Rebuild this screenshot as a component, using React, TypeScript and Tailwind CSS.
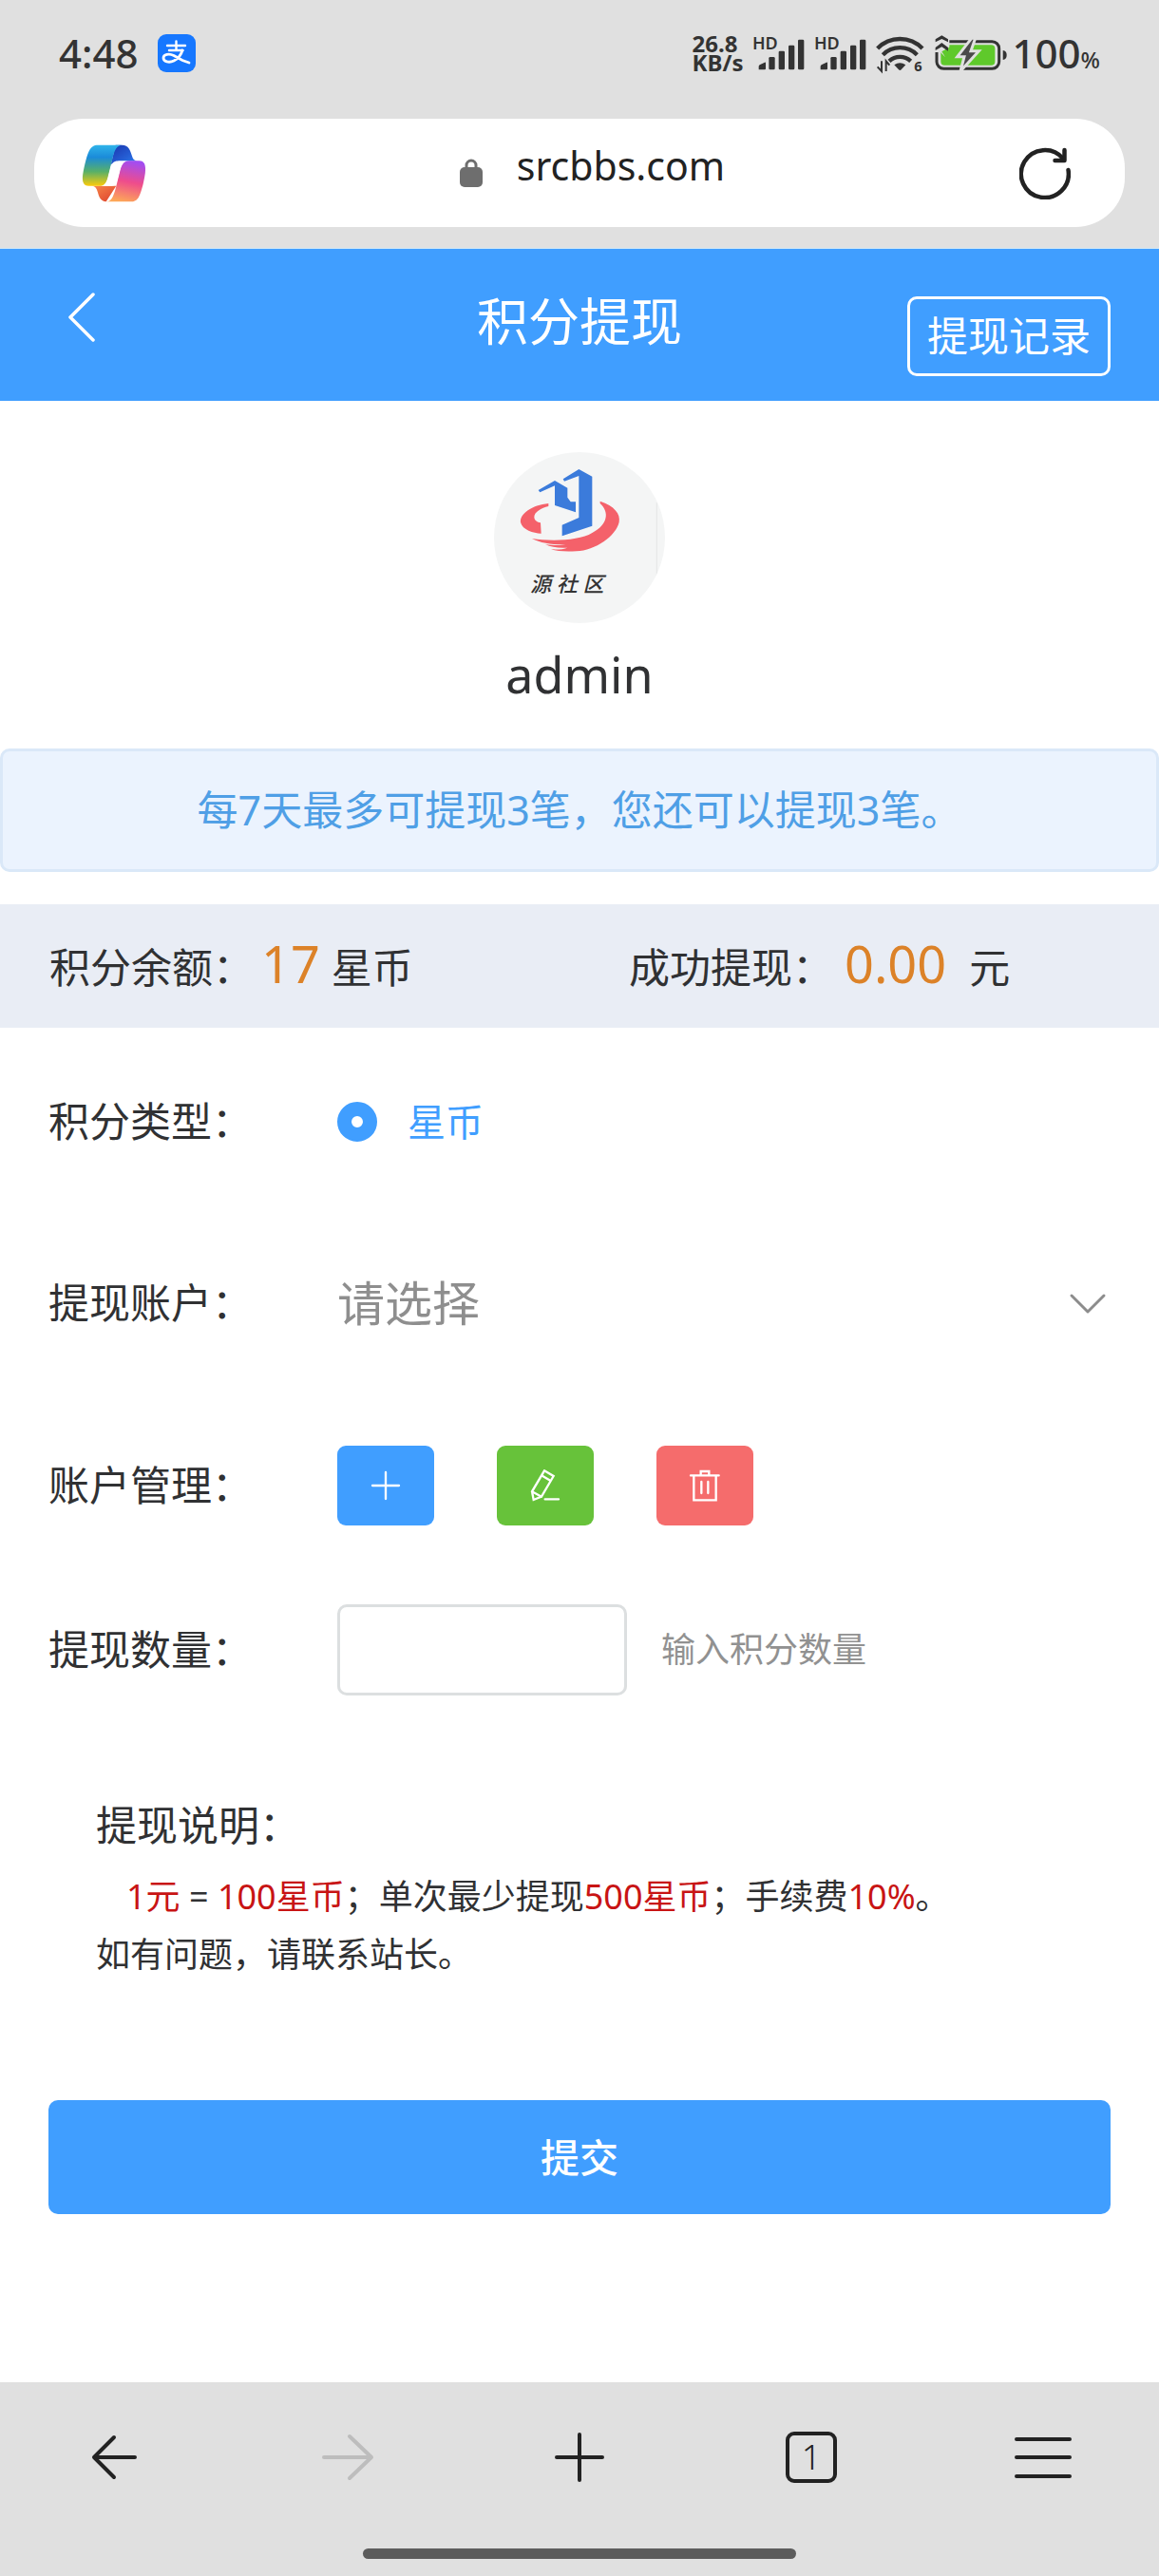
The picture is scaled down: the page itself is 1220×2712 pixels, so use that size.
import React, { useState } from 'react';

const StatusClock = () => (
  <div className="flex items-center gap-5">
    <span className="text-[42px] leading-[60px] font-medium">4:48</span>
    <svg className="w-10 h-10" viewBox="0 0 40 40" fill="none" stroke="#fff" strokeLinecap="round">
      <rect width="40" height="40" rx="9" fill="#1677ff" stroke="none" />
      <path d="M10 12h19M19.500 7.500v9M12 17h14.500" strokeWidth="2.400" />
      <path d="M26 17c-1.500 5-5 9-9 11-5 2.500-11 1-11-3 0-4 6-5 11-2.500l9 5 7 2.500" strokeWidth="2.800" />
    </svg>
  </div>
);

const SignalIcon = () => (
  <svg className="w-[55px] h-[52px]" viewBox="0 -26 165 156" fill="#333">
    <text x="0" y="41" fontSize="54" fontWeight="600">HD</text>
    <path d="M20 104V94q0-3 3-5l16-8q3-1 3 2v18q0 3-3 3z" />
    <rect x="52" y="64" width="19" height="40" rx="4" />
    <rect x="83" y="45" width="19" height="59" rx="4" />
    <rect x="114" y="27" width="19" height="77" rx="4" />
    <rect x="144" y="9" width="19" height="95" rx="4" />
  </svg>
);

const WifiIcon = () => (
  <svg className="w-[52px] h-[50px]" viewBox="597 18 156 150" fill="none" stroke="#333" strokeWidth="13">
    <path d="M602 78a99 99 0 0 1 142 0" />
    <path d="M619 98a76 76 0 0 1 108 0" />
    <path d="M639 118a50 50 0 0 1 68 0" />
    <path d="M655 130q18-12 36 0l-14 15q-4 4-8 0z" fill="#333" stroke="none" />
    <path d="M615 118v32l-13-14M629 150v-32l11 13" strokeWidth="6" />
    <text x="718" y="151" fontSize="44" fontWeight="700" fill="#333" stroke="none">6</text>
  </svg>
);

const BatteryIcon = () => (
  <svg className="w-[77px] h-[38px]" viewBox="796 28 231 114" fill="none">
    <rect x="802" y="48" width="197" height="86" rx="22" stroke="#333" strokeWidth="9" />
    <rect x="815" y="59" width="171" height="64" rx="12" fill="#5fc92b" />
    <path d="M1011 76q12 2 12 15t-12 15z" fill="#333" />
    <path d="M796 28h46v48l-14 20-14-14h-18z" fill="#e0e0e0" />
    <path d="M818 80l14 22 22-42-12 6z" fill="#5fc92b" />
    <path d="M912 38l-45 58h22l-12 46 58-64h-25l14-40z" fill="#4a4a4a" stroke="#e0e0e0" strokeWidth="9" />
    <path d="M798 50v-9l20-12 20 12v9l-20-10zM798 76v-9l20-15 20 15v11l-20-13z" fill="#333" />
  </svg>
);

const CopilotLogo = () => (
  <svg className="w-[68px] h-[61px]" viewBox="108 379 204 184">
    <defs>
      <linearGradient id="ribbonLeft" x1="0" y1="0" x2="0" y2="1">
        <stop offset="0" stopColor="#2fb4ea" />
        <stop offset=".3" stopColor="#1b8bd9" />
        <stop offset=".65" stopColor="#58b068" />
        <stop offset="1" stopColor="#fccb0a" />
      </linearGradient>
      <linearGradient id="ribbonRight" x1=".6" y1="0" x2=".4" y2="1">
        <stop offset="0" stopColor="#a24df2" />
        <stop offset=".5" stopColor="#ee4c8c" />
        <stop offset="1" stopColor="#fda758" />
      </linearGradient>
      <linearGradient id="foldTop" x1="0" y1="0" x2="1" y2="1">
        <stop offset="0" stopColor="#1a34ad" />
        <stop offset="1" stopColor="#2d7cf0" />
      </linearGradient>
      <linearGradient id="foldBottom" x1="0" y1="0" x2="1" y2="1">
        <stop offset="0" stopColor="#f8894a" />
        <stop offset="1" stopColor="#dc3f2c" />
      </linearGradient>
    </defs>
    <path d="M215 381h21c20 0 26 17 31 34 3 12 9 16 21 17h-63l-25 10z" fill="url(#foldTop)" />
    <path d="M140 511h77l-32 50c-17 0-23-16-27-31-3-12-8-18-18-19z" fill="url(#foldBottom)" />
    <path d="M160 381h76c-16 0-24 14-31 44l-15 60c-5 18-12 26-25 26h-35c-17 0-22-13-19-36 6-35 14-65 21-77 6-11 13-17 28-17z" fill="url(#ribbonLeft)" />
    <path d="M262 561h-77c16 0 23-16 30-41l15-60c6-20 13-29 28-29h32c17 0 22 14 19 39-5 35-14 65-21 77-6 10-13 14-26 14z" fill="url(#ribbonRight)" />
    <path d="M222 432h32c-14 1-20 10-25 28l-10 38c-3 9-8 13-17 13h-34c13-2 19-10 23-26l8-32c4-14 10-21 23-21z" fill="#fff" />
  </svg>
);

const Avatar = () => (
  <svg className="w-[180px] h-[180px] rounded-full bg-[#f4f5f5]" viewBox="60 45 540 540">
    <path d="M232 207c-52 5-92 33-88 60 6 24 40 34 65 35l-2-34c-14-2-20-10-20-18 0-16 22-28 45-34z" fill="#f4616a" />
    <path d="M395 200c45 15 65 40 60 66-10 44-75 89-135 92-35 2-60 0-80-6 20 1 40 0 52-5-28 2-52-2-70-11 24 4 48 4 64 1-42 1-80-5-106-19 60 9 150 7 190-18 50-26 55-66 25-93z" fill="#f4616a" />
    <path d="M200 165l52-30 40 23v30l10 14h16v33l-66-22v-62l-47 21z" fill="#3b7bdb" />
    <path d="M278 130l50-31 42 23v156l-95 32v-35l53-23V120l-46 17z" fill="#3b7bdb" />
    <path d="M574 205v230" stroke="#dcdcdc" strokeWidth="2" />
    <text x="174" y="486" fontSize="66" fontWeight="500" fontStyle="italic" fill="#333">源 社 区</text>
  </svg>
);

interface FormRowProps {
  label: string;
  htmlFor?: string;
  className?: string;
  children: React.ReactNode;
}

const FormRow: React.FC<FormRowProps> = ({ label, htmlFor, className, children }) => (
  <div className={`flex items-center ${className ?? ''}`}>
    <label htmlFor={htmlFor} className="w-[304px] shrink-0 text-[43px] leading-[60px]">
      {label}
    </label>
    {children}
  </div>
);

const App: React.FC = () => {
  const [coin, setCoin] = useState('star');
  const [account, setAccount] = useState('');
  const [amount, setAmount] = useState('');

  return (
    <div className="min-h-screen flex flex-col bg-white text-[#303133] font-['Noto_Sans','Noto_Sans_CJK_SC',sans-serif]">
      {/* Status bar and address bar */}
      <div className="bg-[#e0e0e0] px-9 pb-[22px] text-[#333]">
        <div className="flex items-center justify-between px-[26px] pt-[26px] pb-[39px]">
          <StatusClock />
          <div className="flex items-center gap-1">
            <div className="flex items-center gap-[10px]">
              <div className="text-2xl leading-5 font-bold">
                <div>26.8</div>
                <div>KB/s</div>
              </div>
              <SignalIcon />
              <SignalIcon />
              <WifiIcon />
              <BatteryIcon />
            </div>
            <div className="flex items-baseline text-[42px] leading-[60px] font-medium">
              100<span className="text-2xl">%</span>
            </div>
          </div>
        </div>
        <div className="flex items-center h-[114px] rounded-[52px] bg-white pl-[50px] pr-[57px]">
          <button aria-label="Copilot">
            <CopilotLogo />
          </button>
          <div className="flex-1 flex items-center justify-center gap-9 pl-5">
            <svg className="w-6 h-[30px]" viewBox="0 0 24 30">
              <path d="M7 12V7a5 5 0 0 1 10 0v5" fill="none" stroke="#6e6e6e" strokeWidth="3" />
              <rect y="9" width="24" height="21" rx="5" fill="#6e6e6e" />
            </svg>
            <span className="pb-4 text-[41px] leading-[54px] text-[#222]">srcbbs.com</span>
          </div>
          <button aria-label="刷新">
            <svg className="w-[54px] h-[56px]" viewBox="0 0 54 56" fill="none" stroke="#222" strokeWidth="4.500" strokeLinecap="round" strokeLinejoin="round">
              <path d="M51.500 25A25 25 0 1 1 46 13" />
              <path d="M47.500 4v11h-10" />
            </svg>
          </button>
        </div>
      </div>

      {/* Page header */}
      <header className="grid grid-cols-3 items-center border-t border-[#cfe8f8] bg-[#409eff] px-[51px] h-[161px] text-white">
        <button aria-label="返回" className="justify-self-start pl-5 pb-4">
          <svg className="w-[30px] h-[52px]" viewBox="0 0 30 52" fill="none" stroke="currentColor" strokeWidth="3.500" strokeLinecap="round" strokeLinejoin="round">
            <path d="M27 2L3 26l24 24" />
          </svg>
        </button>
        <h1 className="text-center text-[54px] leading-[80px] pb-2">积分提现</h1>
        <div className="justify-self-end pt-6">
          <button className="h-[84px] rounded-[10px] border-3 border-white px-[18px] text-[43px] leading-[76px]">
            提现记录
          </button>
        </div>
      </header>

      <main>
        {/* User info */}
        <div className="flex flex-col items-center pt-[54px] pb-[42px]">
          <Avatar />
          <p className="mt-[18px] text-[52px] leading-[72px]">admin</p>
        </div>

        <div className="rounded-[10px] border-3 border-[#dae8f8] bg-[#ebf3fe] py-8 text-center text-[43px] leading-[60px] text-[#4f9fe6]">
          每7天最多可提现3笔，您还可以提现3笔。
        </div>

        {/* Balance */}
        <div className="mt-[34px] grid grid-cols-2 bg-[#e9edf5] pt-8 pb-7 text-[43px] leading-[70px]">
          <div className="flex items-baseline pl-[52px]">
            积分余额：
            <span className="ml-2 mr-3 text-[54px] leading-[60px] text-[#dc8228]">17</span>
            星币
          </div>
          <div className="flex items-baseline pl-[52px]">
            成功提现：
            <span className="ml-3 mr-6 text-[54px] leading-[60px] text-[#dc8228]">0.00</span>
            元
          </div>
        </div>

        <form className="px-[51px]" onSubmit={(e) => e.preventDefault()}>
          <FormRow label="积分类型：" className="py-[69px]">
            <label className="flex items-center gap-8 text-[40px] leading-[60px] text-[#409eff]">
              <input
                type="radio"
                name="coin"
                value="star"
                checked={coin === 'star'}
                onChange={(e) => setCoin(e.target.value)}
                className="appearance-none w-[42px] h-[42px] rounded-full border-[15px] border-[#409eff] bg-white"
              />
              星币
            </label>
          </FormRow>

          <FormRow label="提现账户：" htmlFor="account" className="py-[60px]">
            <div className="relative flex-1">
              <select
                id="account"
                value={account}
                onChange={(e) => setAccount(e.target.value)}
                className="appearance-none block w-full h-16 bg-transparent text-[50px] leading-[64px] text-[#8e8e8e]"
              >
                <option value="">请选择</option>
              </select>
              <svg className="absolute right-1 top-4 w-10 h-8 pointer-events-none" viewBox="0 0 40 32" fill="none" stroke="#8c8c8c" strokeWidth="3" strokeLinecap="round" strokeLinejoin="round">
                <path d="M3 8l17 17L37 8" />
              </svg>
            </div>
          </FormRow>

          <FormRow label="账户管理：" className="py-[58px]">
            <div className="flex gap-[66px]">
              <button type="button" aria-label="添加" className="flex items-center justify-center w-[102px] h-[84px] rounded-[9px] bg-[#409eff]">
                <svg className="w-[34px] h-[34px]" viewBox="0 0 102 102" fill="none" stroke="#fff" strokeWidth="7" strokeLinecap="round">
                  <path d="M51 9v84M9 51h84" />
                </svg>
              </button>
              <button type="button" aria-label="编辑" className="flex items-center justify-center w-[102px] h-[84px] rounded-[9px] bg-[#67c23a]">
                <svg className="w-[34px] h-[34px]" viewBox="655 137 102 102" fill="none" stroke="#fff" strokeWidth="7" strokeLinecap="round">
                  <path d="M703 141l29 17-38 65-25 10-5-26zM694 156l29 17M664 207l30 16M705 231h43" />
                </svg>
              </button>
              <button type="button" aria-label="删除" className="flex items-center justify-center w-[102px] h-[84px] rounded-[9px] bg-[#f56c6c]">
                <svg className="w-[34px] h-[34px]" viewBox="1158 137 102 102" fill="none" stroke="#fff" strokeWidth="7" strokeLinecap="round">
                  <path d="M1164 156h89M1174 156v78h70v-78M1196 154v-11h26v11M1198 176v36M1219 176v36" />
                </svg>
              </button>
            </div>
          </FormRow>

          <FormRow label="提现数量：" htmlFor="amount" className="py-[25px]">
            <input
              id="amount"
              type="text"
              value={amount}
              onChange={(e) => setAmount(e.target.value)}
              className="w-[305px] h-24 rounded-[10px] border-3 border-[#dcdfe0] px-6 text-[43px]"
            />
            <span className="ml-9 text-4xl leading-[60px] text-[#919191]">输入积分数量</span>
          </FormRow>

          {/* Notes */}
          <div className="px-[50px] pt-20 text-4xl leading-[61px]">
            <h2 className="mb-3 text-[43px] leading-[64px]">提现说明：</h2>
            <p className="pl-8">
              <span className="text-[#c81414]">1元</span> = <span className="text-[#c81414]">100星币</span>；单次最少提现
              <span className="text-[#c81414]">500星币</span>；手续费<span className="text-[#c81414]">10%</span>。
            </p>
            <p>如有问题，请联系站长。</p>
          </div>

          <button type="submit" className="mt-[123px] block w-full h-[120px] rounded-[10px] bg-[#409eff] text-[41px] leading-[60px] font-medium text-white">
            提交
          </button>
        </form>
      </main>

      {/* Browser toolbar */}
      <footer className="mt-auto bg-[#e0e0e0] pb-[18px]">
        <nav className="grid grid-cols-5 justify-items-center items-center h-[157px] mb-[18px] text-[#222]">
          <button aria-label="后退">
            <svg className="w-14 h-14" viewBox="0 0 56 56" fill="none" stroke="currentColor" strokeWidth="4" strokeLinecap="round" strokeLinejoin="round">
              <path d="M48 28H6M26 7L5 28l21 21" />
            </svg>
          </button>
          <button aria-label="前进" disabled className="text-[#bdbdbd]">
            <svg className="w-14 h-14" viewBox="0 0 56 56" fill="none" stroke="currentColor" strokeWidth="4" strokeLinecap="round" strokeLinejoin="round">
              <path d="M3 28h50M30 6l23 22-23 22" />
            </svg>
          </button>
          <button aria-label="新标签页">
            <svg className="w-14 h-14" viewBox="0 0 56 56" fill="none" stroke="currentColor" strokeWidth="4" strokeLinecap="round">
              <path d="M28 4v48M4 28h48" />
            </svg>
          </button>
          <button className="w-[54px] h-[54px] rounded-[9px] border-4 border-[#222] text-4xl leading-[46px] font-light">
            1
          </button>
          <button aria-label="菜单">
            <svg className="w-[60px] h-14" viewBox="0 0 60 56" fill="none" stroke="currentColor" strokeWidth="4" strokeLinecap="round">
              <path d="M2 9h56M2 28h56M2 48h56" />
            </svg>
          </button>
        </nav>
        <div className="mx-auto w-[456px] h-[11px] rounded-full bg-[#5c5c5c]" />
      </footer>
    </div>
  );
};

export default App;
